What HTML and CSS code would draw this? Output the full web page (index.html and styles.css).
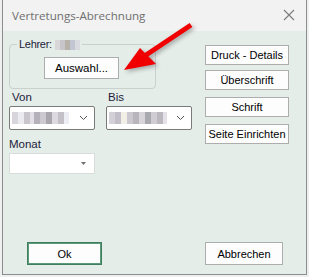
FILE: index.html
```html
<!DOCTYPE html>
<html lang="de">
<head>
<meta charset="utf-8">
<link rel="stylesheet" href="styles.css">
</head>
<body>
<div class="window">
  <div class="titlebar">
    <span class="title">Vertretungs-Abrechnung</span>
    <svg class="close" width="12" height="12" viewBox="0 0 12 12"><path d="M1 1L11 11M11 1L1 11" stroke="#7a7a7a" stroke-width="1.1" fill="none"/></svg>
  </div>
  <div class="client">
    <div class="top">
      <div class="left">
        <fieldset class="group">
          <legend><span class="ltext">Lehrer:</span><span class="blur blur-name"></span></legend>
          <button class="btn auswahl">Auswahl...</button>
        </fieldset>
        <div class="dates">
          <div class="field">
            <label class="lbl">Von</label>
            <div class="combo">
              <span class="blur blur-date"></span>
              <svg class="chev" width="9" height="6" viewBox="0 0 9 6"><path d="M1 1L4.5 4.5L8 1" stroke="#555" stroke-width="1" fill="none"/></svg>
            </div>
          </div>
          <div class="field bis">
            <label class="lbl">Bis</label>
            <div class="combo">
              <span class="blur blur-date2"></span>
              <svg class="chev" width="9" height="6" viewBox="0 0 9 6"><path d="M1 1L4.5 4.5L8 1" stroke="#555" stroke-width="1" fill="none"/></svg>
            </div>
          </div>
        </div>
        <div class="field monat">
          <label class="lbl">Monat</label>
          <div class="combo flat">
            <svg class="tri" width="5" height="3" viewBox="0 0 5 3"><path d="M0 0H5L2.5 3Z" fill="#707070"/></svg>
          </div>
        </div>
      </div>
      <div class="right">
        <button class="btn side">Druck - Details</button>
        <button class="btn side">Überschrift</button>
        <button class="btn side">Schrift</button>
        <button class="btn side">Seite Einrichten</button>
      </div>
    </div>
    <div class="bottom">
      <button class="btn ok">Ok</button>
      <button class="btn cancel">Abbrechen</button>
    </div>
  </div>
</div>
<svg class="arrow" width="309" height="277" viewBox="0 0 309 277">
  <line x1="191" y1="25" x2="146" y2="55" stroke="#f00000" stroke-width="5"/>
  <polygon points="124,70 140,48 156,64" fill="#f00000"/>
</svg>
</body>
</html>
```
FILE: styles.css
```css
html, body {
  margin: 0;
  padding: 0;
}
body {
  position: relative;
  width: 309px;
  height: 277px;
  background: #eef0ef;
  font-family: "Liberation Sans", Arial, sans-serif;
  font-size: 11px;
  color: #000;
  overflow: hidden;
}
.window {
  margin-left: 2px;
  width: 305px;
  height: 275px;
  box-sizing: border-box;
  border: 1px solid #8d8d8d;
  border-top: none;
  background: #e5ede9;
  display: flex;
  flex-direction: column;
}
.titlebar {
  height: 31px;
  flex: none;
  background: #f2f2f2;
  display: flex;
  align-items: center;
  justify-content: space-between;
  padding: 0 11px 0 9px;
}
.title {
  font-family: "Open Sans", "Noto Sans", sans-serif;
  font-size: 11.6px;
  color: #6f6f6f;
  margin-top: -1px;
}
.close {
  display: block;
  margin-top: -1px;
}
.client {
  flex: 1;
  display: flex;
  flex-direction: column;
  padding: 7px 0 9px 6px;
}
.top {
  display: flex;
}
.left {
  width: 182px;
}
.group {
  margin: 0;
  width: 147px;
  box-sizing: border-box;
  border: 1px solid #c9d0cd;
  border-radius: 4px;
  padding: 6px 0 9px 0;
}
.group legend {
  margin-left: 7px;
  padding: 0 2px;
  line-height: 13px;
  color: #1c1c3a;
  display: flex;
  align-items: center;
  gap: 3px;
}
.ltext {
  letter-spacing: -0.3px;
}
.blur {
  display: inline-block;
}
.blur-name {
  width: 25px;
  height: 10px;
  background: linear-gradient(90deg, #d9d7da 0 5px, #c7c5c9 5px 10px, #b7b2a9 10px 15px, #c2c6d3 15px 20px, #d8dae0 20px);
  filter: blur(0.6px);
}
.btn {
  font-family: "Liberation Sans", Arial, sans-serif;
  font-size: 11px;
  color: #000;
  background: #fdfdfd;
  border: 1px solid #adadad;
  border-radius: 0;
  padding: 0;
  margin: 0;
  box-sizing: border-box;
  display: flex;
  align-items: center;
  justify-content: center;
}
.auswahl {
  margin-left: 34px;
  width: 75px;
  height: 22px;
  font-size: 11.5px;
}
.dates {
  display: flex;
  gap: 11px;
  margin-top: 2px;
}
.field {
  display: flex;
  flex-direction: column;
}
.lbl {
  line-height: 13px;
  padding-left: 3px;
  color: #1c1c3a;
  margin-bottom: 2px;
  font-size: 11.5px;
}
.bis .lbl {
  padding-left: 2px;
}
.combo {
  width: 86px;
  height: 24px;
  box-sizing: border-box;
  border: 1px solid #7a7a7a;
  border-radius: 2px;
  background: #fff;
  display: flex;
  align-items: center;
  justify-content: space-between;
  padding: 0 6px 0 2px;
}
.blur-date {
  width: 57px;
  height: 12px;
  background: linear-gradient(90deg, #d8d5dc 0 6px, #ecebef 6px 12px, #c9c5cd 12px 18px, #e2e0e6 18px 22px, #b5b1bb 22px 28px, #cdc9d0 28px 34px, #a9a6ad 34px 40px, #dcdae0 40px 46px, #c3c0c7 46px 52px, #eceef4 52px);
  filter: blur(0.5px);
}
.blur-date2 {
  width: 58px;
  height: 12px;
  background: linear-gradient(90deg, #d3d0d8 0 6px, #c2bfc8 6px 12px, #f2f0e6 12px 18px, #cbc8cf 18px 24px, #b8b5bc 24px 30px, #d7d4da 30px 36px, #a9aab0 36px 42px, #cfcdd3 42px 48px, #bbb8c0 48px 54px, #e4e2e8 54px);
  filter: blur(0.5px);
}
.chev {
  display: block;
}
.monat {
  margin-top: 8px;
}
.monat .lbl {
  padding-left: 0;
}
.combo.flat {
  height: 21px;
  border: 1px solid #d9dcdb;
  border-radius: 0;
  justify-content: flex-end;
  padding-right: 8px;
}
.tri {
  display: block;
}
.right {
  margin-left: 14px;
  margin-top: 7px;
  display: flex;
  flex-direction: column;
  gap: 5px;
}
.side {
  width: 84px;
  height: 20px;
}
.side:nth-child(3), .side:nth-child(4) {
  margin-top: 2px;
}
.bottom {
  margin-top: auto;
  display: flex;
  justify-content: space-between;
  padding: 0 23px 0 18px;
}
.ok {
  width: 75px;
  height: 23px;
  border: 1px solid #3f7f5f;
  box-shadow: inset 0 0 0 1px #5c9a7a;
}
.cancel {
  width: 78px;
  height: 23px;
}
.arrow {
  position: absolute;
  left: 0;
  top: 0;
  pointer-events: none;
  filter: drop-shadow(2px 2px 2px rgba(0, 0, 0, 0.3));
}
```
